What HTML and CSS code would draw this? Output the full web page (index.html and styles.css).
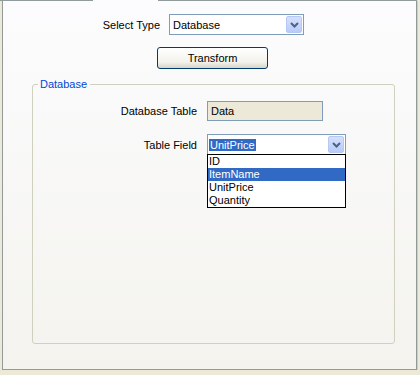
FILE: index.html
```html
<!DOCTYPE html>
<html>
<head>
  <meta charset="UTF-8" />
  <title>Transform</title>
  <link rel="stylesheet" href="styles.css">
</head>
<body>
  <div class="tabpage">
    <div class="tabedge">
      <div class="edge left"></div>
      <div class="gap"></div>
      <div class="edge right"></div>
    </div>

    <div class="typerow">
      <label class="typelabel">Select Type</label>
      <div class="combo typecombo">
        <span class="value">Database</span>
        <span class="dropbtn">
          <svg width="9" height="6" viewBox="0 0 9 6"><path d="M1 1 L4.5 4.5 L8 1" fill="none" stroke="#4d6185" stroke-width="2"/></svg>
        </span>
      </div>
    </div>

    <div class="buttonrow">
      <button type="button" class="xpbutton">Transform</button>
    </div>

    <fieldset class="group">
      <legend>Database</legend>

      <div class="fieldrow">
        <label class="fieldlabel">Database Table</label>
        <div class="textbox">Data</div>
      </div>

      <div class="fieldrow second">
        <label class="fieldlabel">Table Field</label>
        <div class="combo fieldcombo">
          <span class="value"><span class="selected">UnitPrice</span></span>
          <span class="dropbtn">
            <svg width="9" height="6" viewBox="0 0 9 6"><path d="M1 1 L4.5 4.5 L8 1" fill="none" stroke="#4d6185" stroke-width="2"/></svg>
          </span>
          <!-- open dropdown list -->
          <ul class="droplist">
            <li>ID</li>
            <li class="active">ItemName</li>
            <li>UnitPrice</li>
            <li>Quantity</li>
          </ul>
        </div>
      </div>
    </fieldset>
  </div>
</body>
</html>
```

FILE: styles.css
```css
body {
  margin: 0;
  background: #ece9d8;
  font-family: "Liberation Sans", Arial, sans-serif;
  font-size: 11px;
  color: #000;
}
.tabpage {
  margin-left: 2px;
  width: 413px;
  height: 369px;
  border: 1px solid #919b9c;
  border-top: none;
  background: linear-gradient(#fcfcfe, #f4f3ee);
  box-shadow: 1px 1px 0 #d0cdbf;
}
.tabedge {
  display: flex;
  height: 1px;
  margin-left: -3px;
  margin-right: -1px;
}
.edge {
  background: #919b9c;
}
.edge.left {
  width: 93px;
}
.gap {
  width: 65px;
}
.edge.right {
  flex: 1;
}
.typerow {
  display: flex;
  align-items: center;
  padding-top: 13px;
  padding-left: 97px;
}
.typelabel {
  width: 60px;
  text-align: right;
  margin-right: 9px;
}
.combo {
  position: relative;
  height: 21px;
  box-sizing: border-box;
  border: 1px solid #7f9db9;
  background: #fff;
  display: flex;
  align-items: center;
}
.typecombo {
  width: 135px;
}
.combo .value {
  flex: 1;
  padding-left: 3px;
}
.dropbtn {
  width: 16px;
  height: 17px;
  margin-right: 1px;
  box-sizing: border-box;
  border: 1px solid #b6c9f6;
  border-radius: 2px;
  background: linear-gradient(#d5e0fd, #b8cbf8);
  display: flex;
  align-items: center;
  justify-content: center;
}
.buttonrow {
  padding-top: 12px;
  padding-left: 154px;
  line-height: 0;
}
.xpbutton {
  width: 111px;
  height: 22px;
  border: 1px solid #003c74;
  border-radius: 3px;
  background: linear-gradient(#ffffff, #f3f2ec 70%, #d8d5c6);
  font-family: "Liberation Sans", Arial, sans-serif;
  font-size: 11px;
  line-height: 13px;
  color: #000;
  padding: 0;
}
.group {
  margin: 9px 0 0 29px;
  width: 363px;
  height: 266px;
  box-sizing: border-box;
  border: 1px solid #d0d0bf;
  border-radius: 3px;
  padding: 0;
}
.group legend {
  margin-left: 5px;
  padding: 0 3px 0 2px;
  line-height: 13px;
  color: #0046d5;
}
.fieldrow {
  display: flex;
  align-items: center;
  margin-top: 10px;
}
.fieldrow.second {
  margin-top: 13px;
}
.fieldlabel {
  width: 164px;
  text-align: right;
  margin-right: 10px;
}
.textbox {
  width: 116px;
  height: 20px;
  box-sizing: border-box;
  border: 1px solid #7f9db9;
  background: #ece9d8;
  padding-left: 3px;
  line-height: 18px;
}
.fieldcombo {
  width: 139px;
}
.fieldcombo .value {
  padding-left: 1px;
}
.selected {
  background: #316ac5;
  color: #fff;
  padding: 0 1px;
  line-height: 12px;
  display: inline-block;
}
.droplist {
  position: absolute;
  left: -1px;
  top: 19px;
  width: 139px;
  box-sizing: border-box;
  margin: 0;
  padding: 0;
  list-style: none;
  border: 1px solid #000;
  background: #fff;
}
.droplist li {
  height: 13px;
  line-height: 13px;
  padding-left: 1px;
}
.droplist li.active {
  background: #316ac5;
  color: #fff;
}
```
